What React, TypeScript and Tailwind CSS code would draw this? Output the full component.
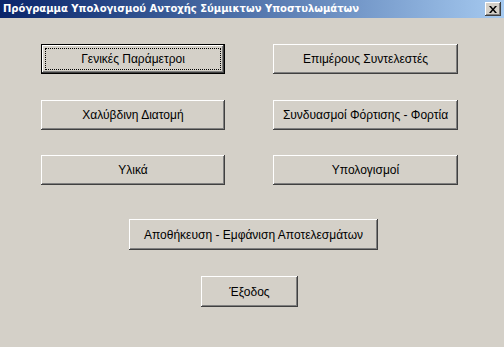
import React from "react";

const btn =
  "flex items-center justify-center bg-[#d4d0c8] text-[12px] text-black shadow-[inset_-1px_-1px_#404040,inset_1px_1px_#ffffff,inset_-2px_-2px_#808080,inset_2px_2px_#d4d0c8]";

function Btn({ label, className }: { label: string; className: string }) {
  return <div className={`${btn} ${className}`}>{label}</div>;
}

export default function App() {
  return (
    <div
      className="w-[504px] h-[347px] bg-[#d4d0c8] flex flex-col overflow-hidden"
      style={{ fontFamily: '"Liberation Sans", Arial, sans-serif' }}
    >
      <div className="h-[18px] flex items-center justify-between pl-[3px] pr-[3px] bg-gradient-to-r from-[#0a246a] to-[#a6caf0]">
        <span
          className="text-white font-bold text-[10px] leading-none"
          style={{ fontFamily: '"DejaVu Sans", sans-serif' }}
        >
          Πρόγραμμα Υπολογισμού Αντοχής Σύμμικτων Υποστυλωμάτων
        </span>
        <div className="w-[16px] h-[14px] bg-[#d4d0c8] flex items-center justify-center shadow-[inset_-1px_-1px_#404040,inset_1px_1px_#ffffff,inset_-2px_-2px_#808080]">
          <svg width="8" height="7" viewBox="0 0 8 7">
            <path d="M0 0h2l2 2.5L6 0h2L5 3.5 8 7H6L4 4.5 2 7H0l3-3.5z" fill="#000" />
          </svg>
        </div>
      </div>
      <div className="flex flex-col pt-[26px] pl-[41px]">
        <div className="flex gap-[48px]">
          <div className="w-[184px] h-[30px] border border-black bg-[#d4d0c8]">
            <div className="w-full h-full flex items-center justify-center shadow-[inset_-1px_-1px_#404040,inset_1px_1px_#ffffff,inset_-2px_-2px_#808080,inset_2px_2px_#d4d0c8] p-[3px]">
              <div className="w-full h-full border border-dotted border-black flex items-center justify-center text-[12px]">
                Γενικές Παράμετροι
              </div>
            </div>
          </div>
          <Btn label="Επιμέρους Συντελεστές" className="w-[185px] h-[30px]" />
        </div>
        <div className="flex gap-[48px] mt-[26px]">
          <Btn label="Χαλύβδινη Διατομή" className="w-[184px] h-[30px]" />
          <Btn label="Συνδυασμοί Φόρτισης - Φορτία" className="w-[185px] h-[30px]" />
        </div>
        <div className="flex gap-[48px] mt-[25px]">
          <Btn label="Υλικά" className="w-[184px] h-[30px]" />
          <Btn label="Υπολογισμοί" className="w-[185px] h-[30px]" />
        </div>
        <div className="flex mt-[34px] pl-[88px]">
          <Btn label="Αποθήκευση - Εμφάνιση Αποτελεσμάτων" className="w-[249px] h-[31px]" />
        </div>
        <div className="flex mt-[26px] pl-[160px]">
          <Btn label="Έξοδος" className="w-[97px] h-[31px]" />
        </div>
      </div>
    </div>
  );
}
